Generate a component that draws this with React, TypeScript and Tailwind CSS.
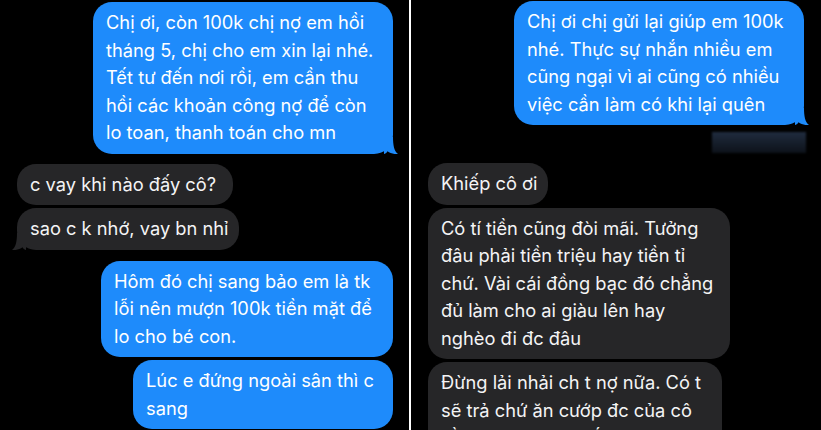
import React from "react";

type BubbleProps = {
  side: "me" | "them";
  w: string;
  mt: string;
  tail?: boolean;
  lines: string[];
};

function Tail({ side }: { side: "me" | "them" }) {
  const fill = side === "me" ? "#1e8bfb" : "#262628";
  return (
    <svg
      width="14"
      height="17"
      viewBox="0 0 14 17"
      className={
        side === "me"
          ? "absolute bottom-0 right-[-5px]"
          : "absolute bottom-0 left-[-5px] -scale-x-100"
      }
    >
      <path
        d="M0 0 H9 C9 8 10 14 14 17 C10 17.4 6 16.4 3.5 14.3 C2.5 16 1 17 0 17 Z"
        fill={fill}
      />
    </svg>
  );
}

function Bubble({ side, w, mt, tail, lines }: BubbleProps) {
  const color =
    side === "me" ? "bg-[#1e8bfb] text-white" : "bg-[#262628] text-[#f4f4f5]";
  const align = side === "me" ? "self-end" : "self-start";
  return (
    <div
      className={`relative ${align} ${w} ${mt} ${color} shrink-0 rounded-[19px] py-[7px] pl-[13px] pr-[8px] text-[18.3px] leading-[27.5px] whitespace-nowrap`}
    >
      {lines.map((l, i) => (
        <div key={i}>{l}</div>
      ))}
      {tail && <Tail side={side} />}
    </div>
  );
}

export default function App() {
  return (
    <div className="flex h-[430px] w-[821px] overflow-hidden bg-black font-['Inter','Noto_Sans',sans-serif]">
      <div className="flex w-[409px] shrink-0 flex-col pl-[17px] pr-[16px]">
        <Bubble
          side="me"
          w="w-[300px]"
          mt="mt-[2px]"
          tail
          lines={[
            "Chị ơi, còn 100k chị nợ em hồi",
            "tháng 5, chị cho em xin lại nhé.",
            "Tết tư đến nơi rồi, em cần thu",
            "hồi các khoản công nợ để còn",
            "lo toan, thanh toán cho mn",
          ]}
        />
        <Bubble
          side="them"
          w="w-[216px]"
          mt="mt-[10px]"
          lines={["c vay khi nào đấy cô?"]}
        />
        <Bubble
          side="them"
          w="w-[222px]"
          mt="mt-[3px]"
          tail
          lines={["sao c k nhớ, vay bn nhỉ"]}
        />
        <Bubble
          side="me"
          w="w-[292px]"
          mt="mt-[11px]"
          lines={[
            "Hôm đó chị sang bảo em là tk",
            "lỗi nên mượn 100k tiền mặt để",
            "lo cho bé con.",
          ]}
        />
        <Bubble
          side="me"
          w="w-[260px]"
          mt="mt-[3px]"
          lines={["Lúc e đứng ngoài sân thì c", "sang"]}
        />
      </div>
      <div className="w-[2px] shrink-0 bg-white" />
      <div className="flex flex-1 flex-col pl-[17px] pr-[17px]">
        <Bubble
          side="me"
          w="w-[290px]"
          mt="mt-[1px]"
          tail
          lines={[
            "Chị ơi chị gửi lại giúp em 100k",
            "nhé. Thực sự nhắn nhiều em",
            "cũng ngại vì ai cũng có nhiều",
            "việc cần làm có khi lại quên",
          ]}
        />
        <div className="mr-[-2px] mt-[7px] h-[21px] w-[94px] shrink-0 self-end bg-gradient-to-b from-[#202c3f] to-[#0d121a] blur-[1px]" />
        <Bubble
          side="them"
          w="w-[120px]"
          mt="mt-[10px]"
          lines={["Khiếp cô ơi"]}
        />
        <Bubble
          side="them"
          w="w-[302px]"
          mt="mt-[3px]"
          lines={[
            "Có tí tiền cũng đòi mãi. Tưởng",
            "đâu phải tiền triệu hay tiền tỉ",
            "chứ. Vài cái đồng bạc đó chẳng",
            "đủ làm cho ai giàu lên hay",
            "nghèo đi đc đâu",
          ]}
        />
        <Bubble
          side="them"
          w="w-[294px]"
          mt="mt-[3px]"
          lines={[
            "Đừng lải nhải ch t nợ nữa. Có t",
            "sẽ trả chứ ăn cướp đc của cô",
            "rồi còn đòi mãi thế",
          ]}
        />
      </div>
    </div>
  );
}
